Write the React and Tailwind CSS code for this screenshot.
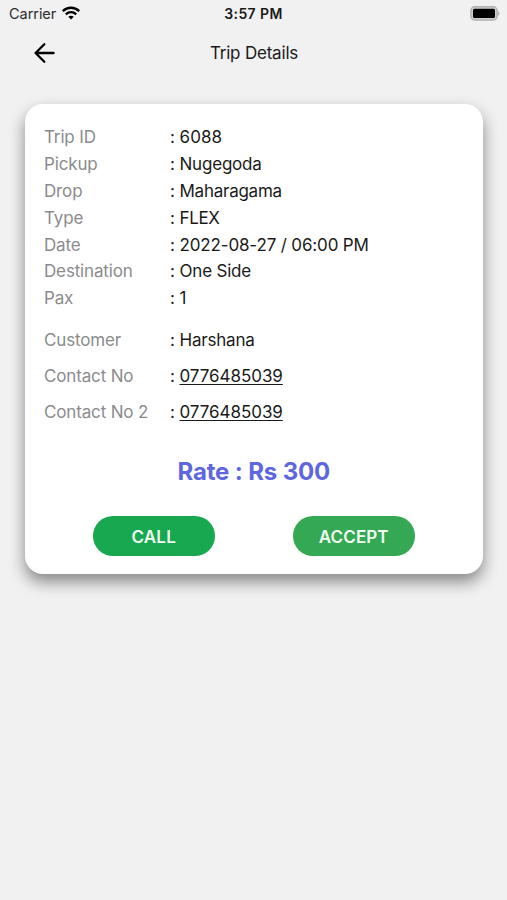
import React from "react";

const tripRows = [
  ["Trip ID", "6088", "tracking-[0.1px]"],
  ["Pickup", "Nugegoda", "tracking-[-0.2px]"],
  ["Drop", "Maharagama", "tracking-[-0.25px]"],
  ["Type", "FLEX", "tracking-[-0.35px]"],
  ["Date", "2022-08-27 / 06:00 PM", "tracking-[-0.15px]"],
  ["Destination", "One Side", "tracking-[-0.2px]"],
  ["Pax", "1", ""],
];

const contactRows = [
  ["Customer", "Harshana", "tracking-[-0.2px]", false],
  ["Contact No", "0776485039", "tracking-[-0.05px]", true],
  ["Contact No 2", "0776485039", "tracking-[-0.05px]", true],
];

function Row({ label, value, tracking, link, className }) {
  return (
    <div className={"flex items-center whitespace-nowrap " + className}>
      <span className="w-[126px] shrink-0 tracking-[-0.15px] text-[#8b8b8d]">{label}</span>
      <span className="w-[9.5px] shrink-0">:</span>
      <span className={tracking + (link ? " underline decoration-1 underline-offset-2" : "")}>{value}</span>
    </div>
  );
}

function StatusBar() {
  return (
    <div className="grid h-7 grid-cols-3 items-center pl-[9px] pr-[7px] text-[14.5px] leading-7">
      <div className="flex items-center gap-[5.5px] text-[#2c2c2c]">
        <span className="tracking-[-0.05px]">Carrier</span>
        <svg className="-mt-[2px]" width="18" height="14" viewBox="0 0 18 14" fill="none" stroke="#000" strokeWidth="2.3">
          <path d="M0.8 5.1C5.4 0.6 12.6 0.6 17.2 5.1" />
          <path d="M3.8 8.3C6.8 5.5 11.2 5.5 14.2 8.3" />
          <path d="M9 13.6L6.3 10.8C7.8 9.4 10.2 9.4 11.7 10.8Z" fill="#000" stroke="none" />
        </svg>
      </div>
      <span className="-ml-[2px] text-center text-[14px] font-semibold tracking-[0.4px]">3:57 PM</span>
      <svg className="-mt-[1px] justify-self-end" width="30" height="15" viewBox="0 0 30 15">
        <rect x="0.9" y="0.8" width="26.2" height="13.2" rx="4" fill="#d0d0d0" stroke="#b0b0b0" strokeWidth="1.5" />
        <rect x="3" y="2.8" width="22" height="9.2" rx="1.5" fill="#000" />
        <path d="M28 5Q31 7.4 28 9.8Z" fill="#b0b0b0" />
      </svg>
    </div>
  );
}

export default function App() {
  return (
    <div className="min-h-[900px] w-full bg-[#f1f1f1] font-['Inter',sans-serif] text-[#1a1a1a]">
      <StatusBar />
      <header className="grid h-[50px] grid-cols-[1fr_auto_1fr] items-center pl-[34px] pr-[33px]">
        <svg width="22" height="22" viewBox="0 0 22 22" fill="none" stroke="#000" strokeWidth="2.3" strokeLinecap="round" strokeLinejoin="round">
          <path d="M10.3 2.2L1.6 11L10.3 19.8M1.6 11H19.6" />
        </svg>
        <h1 className="text-[17px] leading-6 tracking-[-0.2px]">Trip Details</h1>
        <span />
      </header>
      <main className="ml-[25px] mr-[24.5px] mt-[26px] h-[470px] rounded-[18px] bg-white px-[19px] pt-[20.6px] text-[17px] shadow-[0_8px_16px_rgba(0,0,0,0.44)]">
        {tripRows.map(([label, value, tracking]) => (
          <Row key={label} label={label} value={value} tracking={tracking} className="h-[26.85px]" />
        ))}
        <div className="mt-[10.2px]">
          {contactRows.map(([label, value, tracking, link]) => (
            <Row key={label} label={label} value={value} tracking={tracking} link={link} className="h-9" />
          ))}
        </div>
        <div className="mt-[25.2px] text-center text-[24px] font-bold leading-8 tracking-[-0.15px] text-[#5e66e0]">Rate : Rs 300</div>
        <div className="mt-[28px] flex justify-between px-[48.5px] text-[17px] font-semibold text-[#f2fff5]">
          <button className="h-10 w-[122.5px] rounded-full bg-[#17a850] pt-[3px] tracking-[0.2px]">CALL</button>
          <button className="h-10 w-[122.5px] rounded-full bg-[#34a853] pt-[3px] tracking-[0.1px]">ACCEPT</button>
        </div>
      </main>
    </div>
  );
}
